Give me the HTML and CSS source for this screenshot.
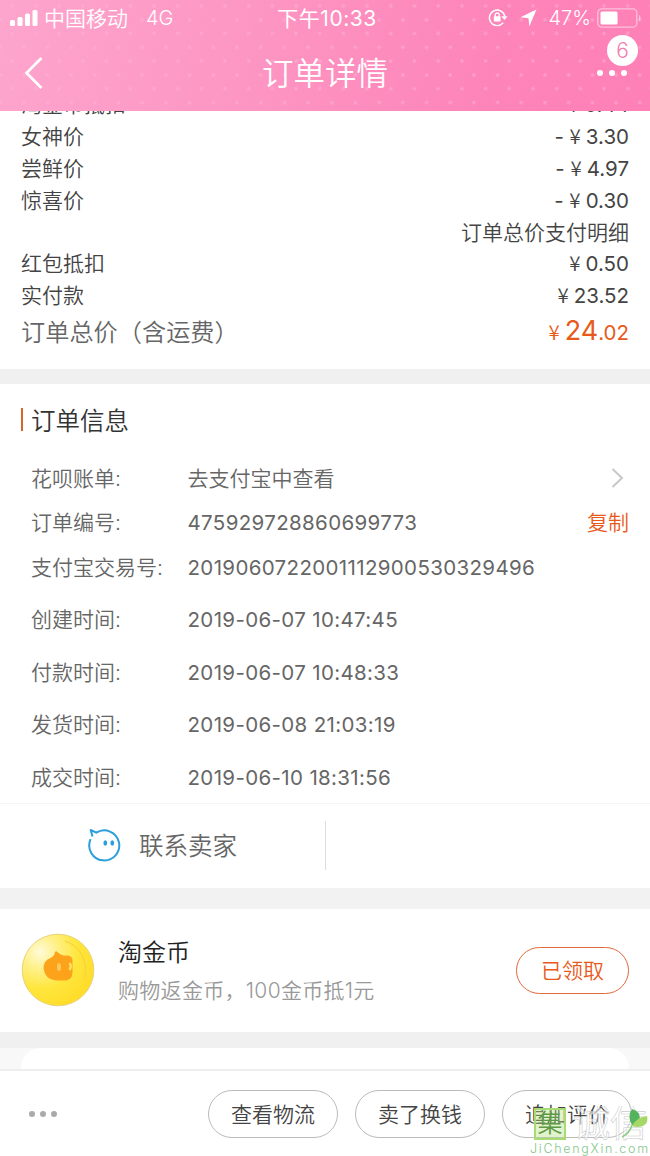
FILE: index.html
```
<!DOCTYPE html>
<html lang="zh-CN">

<head>
  <meta charset="UTF-8">
  <meta name="viewport" content="width=device-width, initial-scale=1.0">
  <title>订单详情</title>
  <link rel="stylesheet" href="styles.css">
</head>

<body>
  <header class="header">
    <div class="status">
      <div class="status-left">
        <svg width="28" height="18" viewBox="0 0 28 18" fill="#fff">
          <rect x="0" y="11" width="5" height="6" rx="1.5" />
          <rect x="7.5" y="8" width="5" height="9" rx="1.5" />
          <rect x="15" y="4.5" width="5" height="12.5" rx="1.5" />
          <rect x="22.5" y="1" width="5" height="16" rx="1.5" />
        </svg>
        <span class="carrier">中国移动</span>
        <span class="network">4G</span>
      </div>
      <div class="time">下午10:33</div>
      <div class="status-right">
        <svg class="lock" width="20" height="20" viewBox="0 0 20 20" fill="none" stroke="#fff" stroke-width="1.4">
          <path d="M15.2 14.8A7.8 7.8 0 1 1 16.8 8" />
          <path d="M13.3 8.2H19.5L16.5 12z" fill="#fff" stroke="none" />
          <rect x="5.8" y="8.3" width="6.8" height="5.2" rx=".6" fill="#fff" stroke="none" />
          <path d="M7.2 9V7a2 2 0 0 1 4 0v2" stroke-width="1.3" />
        </svg>
        <svg class="arrow" width="17" height="18" viewBox="0 0 17 18" fill="#fff">
          <path d="M16.5.5L9.3 17.5 8.5 9.3.5 8.2z" />
        </svg>
        <span class="percent">47%</span>
        <svg width="45" height="20" viewBox="0 0 45 20" fill="none">
          <rect x=".8" y=".8" width="39" height="18.4" rx="4" stroke="#fff" stroke-opacity=".5" stroke-width="1.3" />
          <rect x="3.5" y="3.5" width="17" height="13" rx="1.5" fill="#fff" />
          <path d="M42 6.5q3 3.5 0 7z" fill="#fff" fill-opacity=".5" />
        </svg>
      </div>
    </div>
    <div class="nav">
      <svg class="back" width="22" height="32" viewBox="0 0 22 32" fill="none" stroke="#fff" stroke-width="2.6">
        <path d="M19.5 1L4.5 16l15 15" />
      </svg>
      <h1>订单详情</h1>
      <div class="more"><i></i><i></i><i></i><span class="badge">6</span></div>
    </div>
  </header>

  <main>
    <section class="prices">
      <div class="row"><span>淘金币抵扣</span><span class="num">- <b>¥</b>0.44</span></div>
      <div class="row"><span>女神价</span><span class="num">- <b>¥</b>3.30</span></div>
      <div class="row"><span>尝鲜价</span><span class="num">- <b>¥</b>4.97</span></div>
      <div class="row"><span>惊喜价</span><span class="num">- <b>¥</b>0.30</span></div>
      <div class="row right"><span>订单总价支付明细</span></div>
      <div class="row"><span>红包抵扣</span><span class="num"><b>¥</b>0.50</span></div>
      <div class="row"><span>实付款</span><span class="num"><b>¥</b>23.52</span></div>
      <div class="row total"><span>订单总价（含运费）</span><span class="num"><b>¥</b><em>24</em>.02</span></div>
    </section>

    <section class="info">
      <h2>订单信息</h2>
      <dl>
        <div class="item short">
          <dt>花呗账单:</dt>
          <dd>去支付宝中查看</dd>
          <svg class="chevron" width="13" height="20" viewBox="0 0 13 20" fill="none" stroke="#c8c8c8" stroke-width="2">
            <path d="M1.5 1l9.5 9-9.5 9" />
          </svg>
        </div>
        <div class="item short">
          <dt>订单编号:</dt>
          <dd class="digits">475929728860699773</dd>
          <a class="copy">复制</a>
        </div>
        <div class="item short">
          <dt>支付宝交易号:</dt>
          <dd class="digits">2019060722001112900530329496</dd>
        </div>
        <div class="item">
          <dt>创建时间:</dt>
          <dd class="digits">2019-06-07 10:47:45</dd>
        </div>
        <div class="item">
          <dt>付款时间:</dt>
          <dd class="digits">2019-06-07 10:48:33</dd>
        </div>
        <div class="item">
          <dt>发货时间:</dt>
          <dd class="digits">2019-06-08 21:03:19</dd>
        </div>
        <div class="item">
          <dt>成交时间:</dt>
          <dd class="digits">2019-06-10 18:31:56</dd>
        </div>
      </dl>
    </section>

    <section class="contact">
      <div class="seller">
        <svg width="34" height="36" viewBox="0 0 34 36" fill="none" stroke="#2a9fdc" stroke-width="2" stroke-linejoin="round">
          <path d="M2.600 11.200A15 15 0 1 0 8.300 4.700L2.700 2 4.500 8.500" />
          <ellipse cx="17.300" cy="15" rx="1.900" ry="2.700" fill="#2a9fdc" stroke="none" />
          <ellipse cx="24.300" cy="15" rx="1.900" ry="2.700" fill="#2a9fdc" stroke="none" />
        </svg>
        <span>联系卖家</span>
      </div>
    </section>

    <section class="coin">
      <svg width="74" height="76" viewBox="0 0 74 76">
        <defs>
          <radialGradient id="gold" cx=".25" cy=".25" r=".8">
            <stop offset="0" stop-color="#fffbd8" />
            <stop offset=".3" stop-color="#fff08a" />
            <stop offset=".65" stop-color="#ffe63c" />
            <stop offset="1" stop-color="#ffdd2a" />
          </radialGradient>
        </defs>
        <circle cx="37" cy="37" r="35.800" fill="url(#gold)" stroke="#e8d27a" />
        <path d="M44 8a30 30 0 0 1 19 38" fill="none" stroke="#fbd040" stroke-width="1.200" />
        <path d="M34 19q1-1.500 2.500 0 2 2.500 6 3.500h4q5 .5 5 5v12q0 7-7 8H35q-11-1-12.500-12 0-8 7-10.500 4-2 4.500-6z" fill="#fca31b" />
        <ellipse cx="38" cy="34" rx="2" ry="4" fill="#ffca5a" />
        <path d="M48.500 30q2.500 3 0 7" stroke="#ffdf66" stroke-width="2.500" fill="none" />
      </svg>
      <div class="coin-text">
        <h3>淘金币</h3>
        <p>购物返金币，100金币抵1元</p>
      </div>
      <button class="received">已领取</button>
    </section>

    <section class="next">
      <div class="card"></div>
    </section>
  </main>

  <footer class="actions">
    <div class="dots"><i></i><i></i><i></i></div>
    <button>查看物流</button>
    <button>卖了换钱</button>
    <button>追加评价</button>
  </footer>

  <div class="watermark">
    <div class="mark-top">
      <span class="mark-box">集</span>
      <span class="mark-name">诚信</span>
      <svg class="leaf" width="28" height="32" viewBox="0 0 28 32">
        <path d="M11 17Q6 8 11 1q8 2 8 10-1 4-8 6z" fill="#55b25f" />
        <path d="M11 18Q17 8 26 8q2 7-4 10-6 2-11 0z" fill="#a5d866" />
        <path d="M11 17Q9 25 1 29" fill="none" stroke="#8ccc82" stroke-width="1.500" />
      </svg>
    </div>
    <div class="mark-url">JiChengXin.com</div>
  </div>
</body>

</html>
```
FILE: styles.css
```
* {
  box-sizing: border-box;
  margin: 0;
  padding: 0;
}

body {
  display: flex;
  flex-direction: column;
  width: 650px;
  height: 1156px;
  overflow: hidden;
  position: relative;
  background: #fff;
  color: #444;
  font-family: Inter, "Noto Sans CJK SC", sans-serif;
  font-weight: 350;
  font-size: 21px;
}

svg {
  display: block;
  flex: none;
}

button {
  padding-bottom: 3px;
  background: none;
  font: inherit;
}

/* header */
.header {
  height: 111px;
  flex: none;
  z-index: 1;
  color: #fff;
  background:
    radial-gradient(circle, rgba(255, 180, 214, .5) 1px, transparent 2.5px) 0 -8px / 23.7px 27.6px,
    radial-gradient(circle, rgba(255, 180, 214, .5) 1px, transparent 2.5px) 12px 6px / 23.7px 27.6px,
    linear-gradient(100deg, #fda5cd, #fd93c1 45%, #fd84b9 75%, #fe80b6);
}

.status {
  display: grid;
  grid-template-columns: 1fr auto 1fr;
  align-items: center;
  height: 36px;
  padding: 0 10px;
  font-size: 20px;
}

.status-left,
.status-right {
  display: flex;
  align-items: center;
}

.status-right {
  justify-content: flex-end;
  margin-right: -2px;
}

.carrier {
  margin-left: 6px;
  padding-bottom: 2px;
  font-size: 21px;
}

.network {
  margin-left: 18px;
}

.time {
  margin-left: 4px;
  padding-bottom: 2px;
  font-size: 21px;
  font-weight: 400;
  letter-spacing: .5px;
}

.lock {
  margin-right: 12px;
}

.arrow {
  margin-right: 11px;
}

.percent {
  margin-right: 6px;
}

.nav {
  display: grid;
  grid-template-columns: 60px 1fr 60px;
  align-items: center;
  height: 74px;
  padding: 0 22px;
}

.nav h1 {
  padding-bottom: 4px;
  text-align: center;
  font-size: 31.5px;
  font-weight: 350;
}

.more {
  position: relative;
  display: flex;
  justify-content: flex-end;
  gap: 6px;
  padding-right: 1px;
}

.more i {
  width: 6px;
  height: 6px;
  border-radius: 50%;
  background: #fff;
}

.badge {
  position: absolute;
  right: -10px;
  top: -35px;
  width: 31px;
  height: 31px;
  border-radius: 50%;
  background: #fff;
  color: #f47bb0;
  font-size: 21px;
  line-height: 31px;
  text-align: center;
}

main {
  flex: 1;
  min-height: 0;
  overflow: hidden;
}

/* prices */
.prices {
  display: flow-root;
  height: 273px;
  padding: 0 21px;
  border-bottom: 15px solid #f0f0f0;
}

.row {
  display: flex;
  align-items: center;
  justify-content: space-between;
  height: 31.8px;
  padding-bottom: 3px;
}

.row:first-child {
  margin-top: -22px;
}

.right {
  justify-content: flex-end;
}

.num {
  font-size: 20.5px;
  font-weight: 400;
}

.num b {
  margin-right: 5px;
  font-family: "Noto Sans CJK SC", sans-serif;
  font-weight: 350;
}

.total {
  height: 40px;
  color: #666;
  font-size: 24.2px;
}

.total .num {
  color: #e85a1c;
  font-size: 20.5px;
}

.total em {
  font-size: 27px;
  font-style: normal;
}

/* order info */
.info {
  height: 420px;
  padding: 17px 21px 0;
  border-bottom: 1px solid #f5f5f5;
  color: #666;
}

.info h2 {
  display: flex;
  align-items: center;
  height: 38px;
  margin-bottom: 17px;
  padding-bottom: 2px;
  color: #333;
  font-size: 24.5px;
  font-weight: 350;
}

.info h2::before {
  content: "";
  width: 2px;
  height: 23px;
  margin-right: 8px;
  background: #d5672a;
}

.item {
  display: grid;
  grid-template-columns: 156.5px 1fr auto;
  align-items: center;
  height: 52.6px;
  padding-left: 10px;
}

.item.short {
  height: 44.5px;
}

.item.short + .item:not(.short) {
  margin-top: 4px;
}

.item dt,
.item dd,
.copy {
  padding-bottom: 3px;
}

.item .digits {
  padding-bottom: 0;
  font-size: 20.5px;
  font-weight: 400;
  letter-spacing: .35px;
}

.chevron {
  margin-right: 5px;
}

.copy {
  color: #e85a1c;
}

/* contact */
.contact {
  height: 105px;
  padding-top: 17px;
  background: linear-gradient(#f2f2f2, #f2f2f2) bottom / 100% 21px no-repeat;
}

.seller {
  display: flex;
  align-items: center;
  width: 326px;
  height: 49px;
  padding-left: 88px;
  border-right: 1px solid #ddd;
  color: #666;
  font-size: 24.5px;
}

.seller span {
  margin-left: 17px;
  padding-bottom: 3px;
}

/* coin */
.coin {
  display: flex;
  align-items: center;
  height: 123px;
  padding: 0 21px;
}

.coin-text {
  flex: 1;
  margin-left: 23px;
}

.coin-text h3 {
  padding-top: 2px;
  color: #222;
  font-size: 24px;
  font-weight: 350;
  line-height: 38px;
}

.coin-text p {
  color: #999;
  letter-spacing: .3px;
  line-height: 38px;
}

.received {
  width: 113px;
  height: 47px;
  border: 1.5px solid #e0693c;
  border-radius: 24px;
  color: #e85a1c;
}

.next {
  height: 40px;
  padding: 0 21px;
  border-top: 16px solid #f0f0f0;
  background: #f8f8f8;
}

.card {
  height: 60px;
  border-radius: 20px;
  background: #fff;
}

/* bottom bar */
.actions {
  display: flex;
  align-items: center;
  flex: none;
  gap: 17px;
  height: 87px;
  padding: 1px 18px 0 29px;
  border-top: 2px solid #eee;
  background: #fff;
  z-index: 1;
}

.dots {
  display: flex;
  gap: 5px;
  margin-right: auto;
}

.dots i {
  width: 6px;
  height: 6px;
  border-radius: 50%;
  background: #aaa;
}

.actions button {
  width: 130px;
  height: 48px;
  border: 1px solid #bbb;
  border-radius: 24px;
  color: #444;
}

/* watermark */
.watermark {
  position: absolute;
  right: 0;
  bottom: 0;
  width: 120px;
  height: 50px;
  z-index: 2;
  overflow: hidden;
}

.mark-top {
  display: flex;
  align-items: center;
  height: 36px;
  padding-left: 4px;
}

.mark-box {
  width: 32px;
  height: 32px;
  border: 2px solid #a8db74;
  background: rgba(180, 226, 130, .4);
  color: #5f9a45;
  font-size: 25px;
  line-height: 26px;
  text-align: center;
}

.mark-name {
  margin-left: 7px;
  color: rgba(255, 255, 255, .6);
  font-size: 37px;
  font-weight: 400;
  line-height: 30px;
  -webkit-text-stroke: .6px #ccc;
}

.leaf {
  position: absolute;
  right: 1px;
  top: 2px;
}

.mark-url {
  color: #85c78a;
  font-size: 12.5px;
  letter-spacing: 1.7px;
  line-height: 14px;
  white-space: nowrap;
}
```
